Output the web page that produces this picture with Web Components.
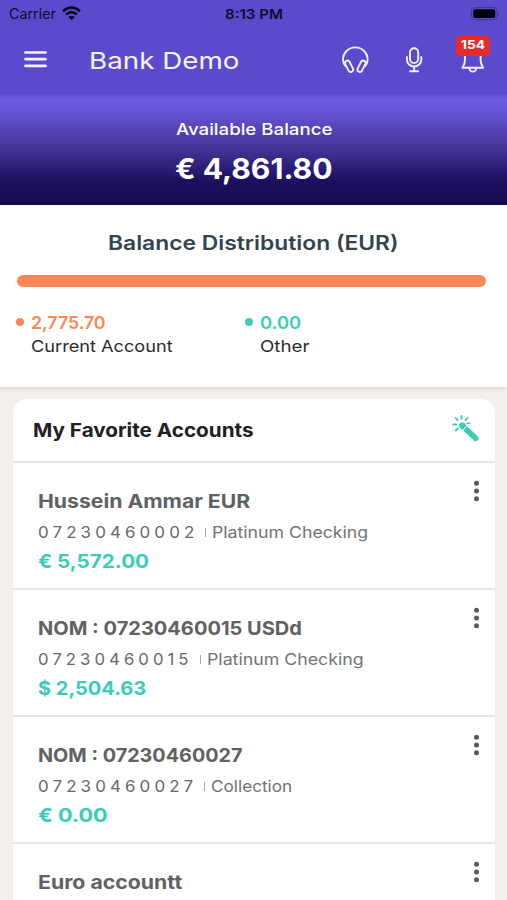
<!DOCTYPE html>
<html lang="en">
<head>
<meta charset="utf-8">
<title>Bank Demo</title>
<style>
html,body{margin:0;padding:0}
body{width:507px;height:900px;overflow:hidden;background:#f2efec;font-family:Inter,"Open Sans",sans-serif}
</style>
</head>
<body>
<bank-app></bank-app>
<script>
function define(name, html, setup){
  const t=document.createElement('template');
  t.innerHTML=html;
  customElements.define(name,class extends HTMLElement{
    connectedCallback(){
      if(this.shadowRoot)return;
      this.attachShadow({mode:'open'}).append(t.content.cloneNode(true));
      if(setup)setup(this,this.shadowRoot);
    }
  });
}

define('fit-text',`<style>
:host{display:block;flex:none;white-space:nowrap}
span{display:inline-block;transform-origin:0 50%}
</style><span></span>`,(el,root)=>{
  const s=root.querySelector('span');
  s.textContent=el.getAttribute('text');
  const w=+el.getAttribute('w');
  el.style.width=w+'px';
  const ls=parseFloat(getComputedStyle(s).letterSpacing)||0;
  s.style.transform='scaleX('+(w/(s.offsetWidth-ls))+')';
});

define('status-bar',`<style>
:host{display:grid;grid-template-columns:1fr auto 1fr;align-items:center;height:28px;padding:0 7px 0 9px;color:#0d0a2b;font-size:14px;line-height:28px}
.l{display:flex;align-items:center;gap:6px}
.c{font-weight:600;font-size:13.5px;margin-left:-2px}
.r{justify-self:end;height:28px;display:flex;align-items:center}
svg{display:block}
.wifi{margin-top:-2px}
</style>
<div class="l"><fit-text text="Carrier" w="47"></fit-text>
<svg class="wifi" width="19" height="15" viewBox="0 0 19 15" fill="none" stroke="#08051c" stroke-width="2.500"><path d="M1 5.200Q9.500-2.200 18 5.200M4 8.500Q9.500 3.800 15 8.500"/><path d="M9.500 14.200L6.300 11Q9.500 8.300 12.700 11Z" fill="#08051c" stroke="none"/></svg></div>
<fit-text class="c" text="8:13 PM" w="58"></fit-text>
<div class="r"><svg width="30" height="14" viewBox="0 0 30 14"><rect x="1.500" y=".5" width="25.500" height="12.200" rx="3.500" fill="none" stroke="#40329a"/><rect x="3.200" y="2.200" width="22" height="8.800" rx="1.800" fill="#02010a"/><path d="M28.200 4.800q2 2 0 4z" fill="#40329a"/></svg></div>`);

define('app-bar',`<style>
:host{display:flex;align-items:center;height:66px;padding:0 21px 0 24px;box-sizing:border-box;color:#f7f3ff}
fit-text{font-size:23.500px;line-height:30px;margin:0 auto 1px 42px}
svg{display:block;fill:none;stroke:#f5f0ff;stroke-width:1.900;stroke-linecap:round;stroke-linejoin:round}
.icons{display:flex;align-items:center}
.bell{position:relative}
.badge{position:absolute;left:-4px;top:-11px;width:34px;height:20px;border-radius:3px;background:#e42c2c;display:flex;justify-content:center;color:#fff}
.badge fit-text{margin:0;line-height:18px;font-size:12px;font-weight:700}
</style>
<svg width="23" height="18" viewBox="0 0 23 18" style="margin-top:-4px;stroke-width:2.700"><path d="M1.500 2.500h20M1.500 9.200h20M1.500 15.900h20"/></svg>
<fit-text text="Bank Demo" w="150"></fit-text>
<div class="icons">
<svg width="28" height="28" viewBox="0 0 28 28" style="margin-right:36px;margin-top:-3px"><path d="M4 20.500Q1 17.500 1 13.700a12.300 12.300 0 0 1 24.600 0Q25.600 17.500 22.600 20.500"/><rect x="4.700" y="14.300" width="4.800" height="12" rx="2.400" transform="rotate(-27 7.100 20.300)"/><rect x="17.100" y="14.300" width="4.800" height="12" rx="2.400" transform="rotate(27 19.500 20.300)"/></svg>
<svg width="18" height="26" viewBox="0 0 18 26" style="margin-right:36px;margin-top:-3px"><rect x="4" y="1.200" width="8.200" height="14.800" rx="4.100"/><path d="M.9 10v2.500a7.200 7 0 0 0 14.400 0V10M8.100 19.500v4.500M4 24.300h8.200"/></svg>
<div class="bell"><svg width="26" height="28" viewBox="0 0 26 28"><path d="M5 8v5c0 3.500-1 5-2.500 7.700h20.600c-1.500-2.700-2.500-4.200-2.500-7.700V8M9.300 21a3.500 3.600 0 0 0 7 0"/></svg><div class="badge"><fit-text text="154" w="24"></fit-text></div></div>
</div>`);

define('balance-banner',`<style>
:host{display:flex;flex-direction:column;align-items:center;height:111px;box-sizing:border-box;padding-top:24px;color:#fff;background:linear-gradient(#5f4fd1 0,#6d59df 5px,#6856da 16px,#5645b9 34px,#433497 55px,#2d207a 72px,#1b105c 88px,#170b50 111px)}
.a{font-size:16.500px;font-weight:500;line-height:23px}
.b{font-size:28px;font-weight:700;line-height:34px;margin-top:11px}
</style>
<fit-text class="a" text="Available Balance" w="156"></fit-text>
<fit-text class="b" text="€ 4,861.80" w="158"></fit-text>`);

customElements.define('balance-distribution',class extends HTMLElement{
  connectedCallback(){
    const item=(c,v,vw,n,nw)=>`<div class="item" style="--c:${c}"><i></i><fit-text class="v" text="${v}" w="${vw}"></fit-text><fit-text class="n" text="${n}" w="${nw}"></fit-text></div>`;
    this.attachShadow({mode:'open'}).innerHTML=`<style>
:host{display:block;height:182px;box-sizing:border-box;padding:26px 21px 0 17px;background:#fff;box-shadow:0 1px 4px #0002}
.t{margin:0 auto;padding-left:3px;font-size:20px;font-weight:600;line-height:25px;color:#33434f}
.bar{height:12px;border-radius:6px;background:#ff8656;margin-top:19px}
.legend{display:grid;grid-template-columns:228.500px 1fr;margin-top:24px}
.item{display:grid;grid-template-columns:8px 1fr;column-gap:7px;align-content:start;margin-left:-1px}
i{width:8px;height:8px;border-radius:50%;background:var(--c);margin-top:7px}
.v{font-size:17.500px;font-weight:600;line-height:24px;color:var(--c)}
.n{font-size:16.500px;line-height:22px;color:#2b2b2b;grid-column:2}
</style>
<fit-text class="t" text="Balance Distribution (EUR)" w="291"></fit-text>
<div class="bar"></div>
<div class="legend">${item('#ff8656','2,775.70',75,'Current Account',142)}${item('#3accb8','0.00',41,'Other',50)}</div>`;
  }
});

customElements.define('account-row',class extends HTMLElement{
  connectedCallback(){
    const a=k=>(this.getAttribute(k)||'').split('|');
    const f=(cls,k)=>{const[t,w]=a(k);return t?`<fit-text class="${cls}" text="${t}" w="${w}"></fit-text>`:''};
    this.attachShadow({mode:'open'}).innerHTML=`<style>
:host{display:flex;justify-content:space-between;height:127px;box-sizing:border-box;padding:26px 15.500px 0 24.500px;border-bottom:2px solid #e6e6e6}
.name{font-size:19px;font-weight:700;line-height:25px;color:#5f6163}
.meta{display:flex;align-items:center;height:30px;margin-top:3px;color:#717375}
.num{font-size:16.500px;letter-spacing:4px;line-height:30px;color:#666869}
.pipe{width:1px;height:9px;background:#aaa;margin:1px 6.500px 0 11px}
.type{font-size:16px;line-height:30px}
.amt{font-size:19px;font-weight:700;line-height:29px;color:#3accb8}
svg{display:block;margin-top:-9px}
</style>
<div>${f('name','name')}${this.hasAttribute('num')?`<div class="meta">${f('num','num')}<span class="pipe"></span>${f('type','type')}</div>`:''}${f('amt','amt')}</div>
<svg width="6" height="22" viewBox="0 0 6 22" fill="#58595b"><circle cx="2.500" cy="3.300" r="2.500"/><circle cx="2.500" cy="11" r="2.500"/><circle cx="2.500" cy="18.700" r="2.500"/></svg>`;
  }
});

define('favorite-accounts',`<style>
:host{display:block;margin:12px 12px 0 13px;background:#fff;border-radius:14px 14px 0 0}
header{display:flex;justify-content:space-between;height:64px;box-sizing:border-box;border-bottom:2px solid #e6e6e6;padding:19px 15px 0 19.500px}
header fit-text{font-size:19px;font-weight:700;line-height:25px;color:#202022}
svg{display:block;margin-top:-4px}
</style>
<header><fit-text text="My Favorite Accounts" w="221"></fit-text>
<svg width="28" height="28" viewBox="0 0 28 28" fill="none" stroke="#3accb8" stroke-linecap="round"><circle cx="10.300" cy="11.600" r="3.200" fill="#3accb8" stroke="none"/><path d="M10.300 11.600L23.600 24.200" stroke-width="5.600"/><path d="M10.500 16.700L15.800 11" stroke="#fff" stroke-width="1" stroke-linecap="butt"/><path d="M9.500 1.800v3M3.600 4l2 2.200M15.500 4l-1.900 2.200M1.200 10.500h3M3.800 16.500l2-2M15.300 9.300h2.200" stroke-width="1.800"/></svg></header>
<account-row name="Hussein Ammar EUR|212" num="07230460002|156" type="Platinum Checking|156" amt="€ 5,572.00|111"></account-row>
<account-row name="NOM : 07230460015 USDd|263.5" num="07230460015|151" type="Platinum Checking|156.5" amt="$ 2,504.63|108.5"></account-row>
<account-row name="NOM : 07230460027|205" num="07230460027|155" type="Collection|81.5" amt="€ 0.00|69.5"></account-row>
<account-row name="Euro accountt|144.500"></account-row>`);

define('bank-app',`<style>
:host{display:block;width:507px;height:900px;overflow:hidden;background:#f2efec}
.top{height:94px;background:#5b4bcc}
</style>
<div class="top"><status-bar></status-bar><app-bar></app-bar></div>
<balance-banner></balance-banner>
<balance-distribution></balance-distribution>
<favorite-accounts></favorite-accounts>`);
</script>
</body>
</html>
